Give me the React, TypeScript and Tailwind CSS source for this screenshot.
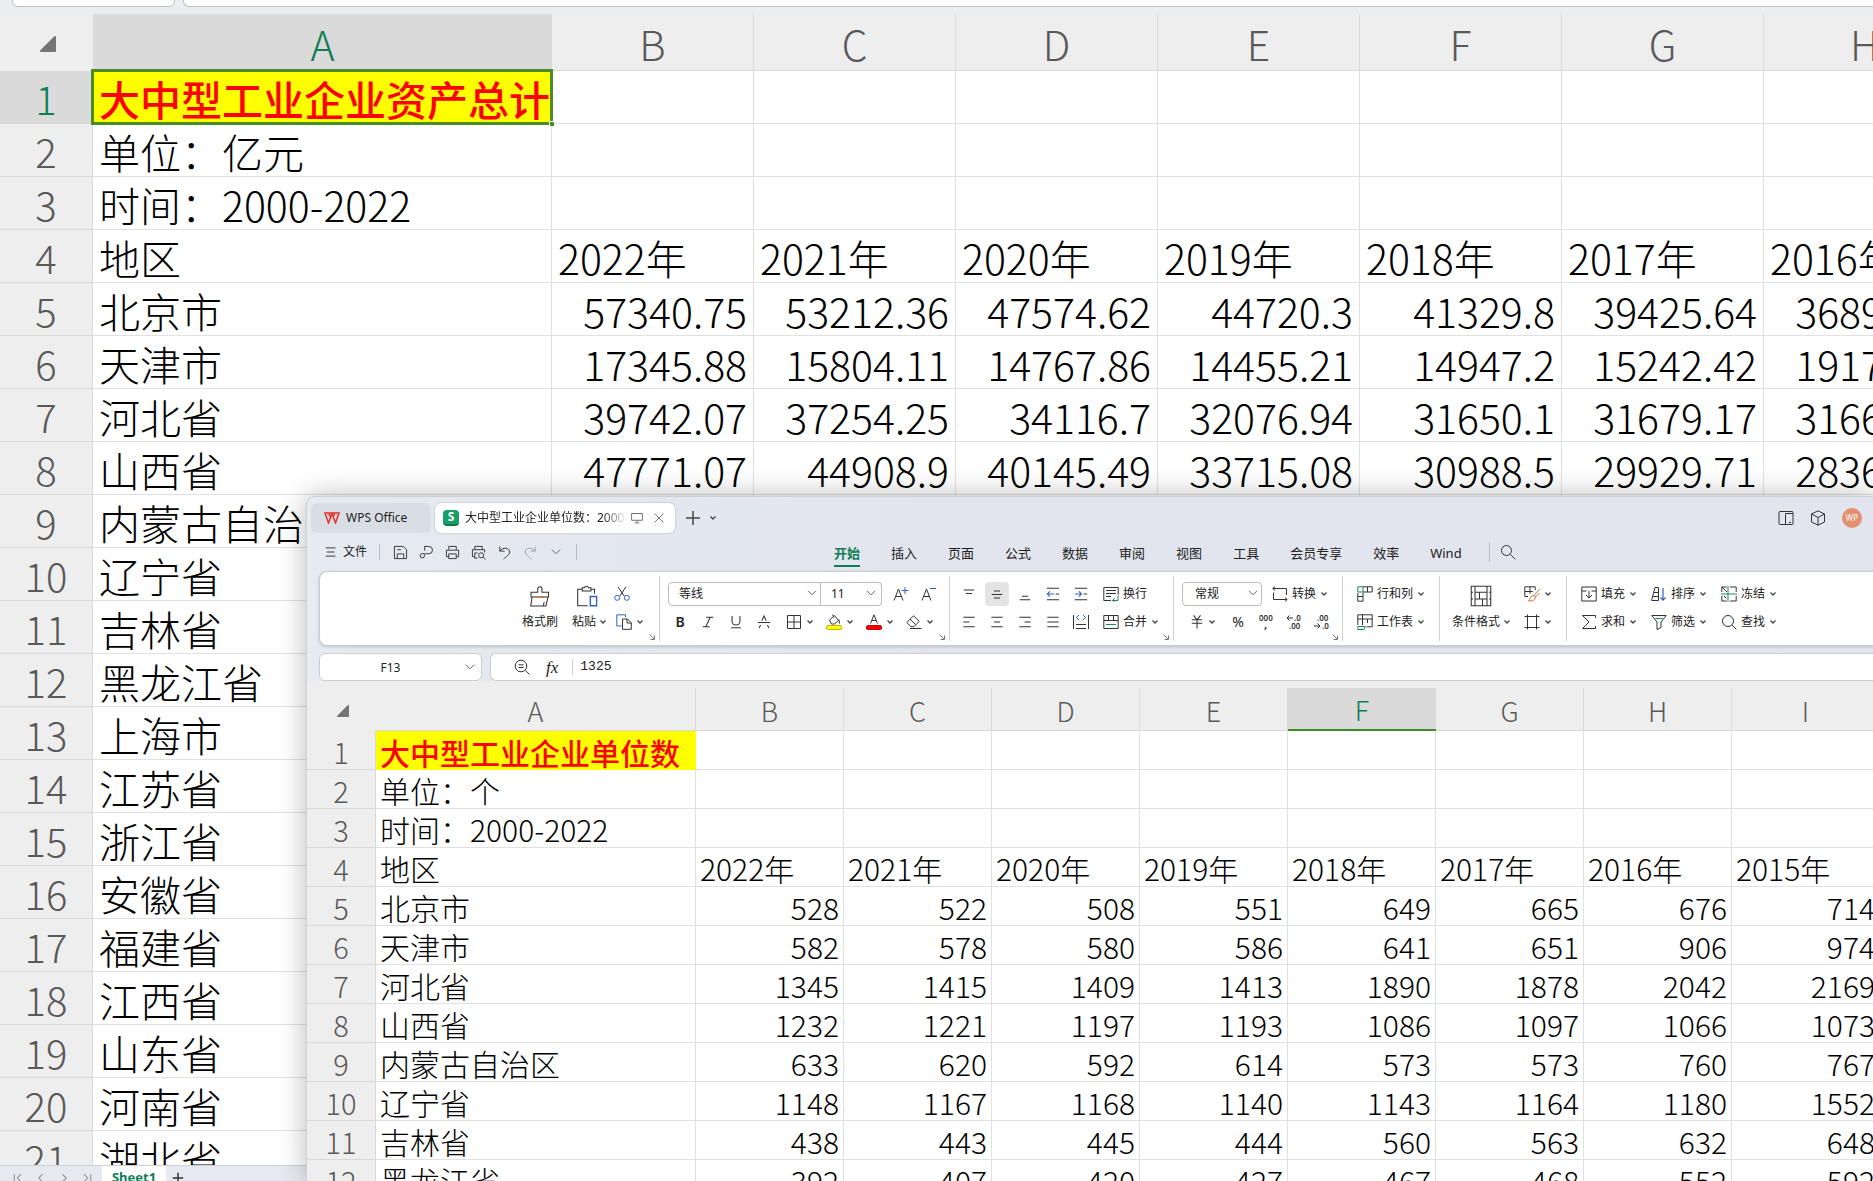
import React from 'react';

type Cell = string | number;

const years = ['2022年', '2021年', '2020年', '2019年', '2018年', '2017年', '2016年', '2015年'];

const assetRows: Cell[][] = [
  ['大中型工业企业资产总计'],
  ['单位：亿元'],
  ['时间：2000-2022'],
  ['地区', ...years.slice(0, 7)],
  ['北京市', 57340.75, 53212.36, 47574.62, 44720.3, 41329.8, 39425.64, 36891.52],
  ['天津市', 17345.88, 15804.11, 14767.86, 14455.21, 14947.2, 15242.42, 19172.64],
  ['河北省', 39742.07, 37254.25, 34116.7, 32076.94, 31650.1, 31679.17, 31665.38],
  ['山西省', 47771.07, 44908.9, 40145.49, 33715.08, 30988.5, 29929.71, 28364.25],
  ['内蒙古自治区'],
  ['辽宁省'],
  ['吉林省'],
  ['黑龙江省'],
  ['上海市'],
  ['江苏省'],
  ['浙江省'],
  ['安徽省'],
  ['福建省'],
  ['江西省'],
  ['山东省'],
  ['河南省'],
  ['湖北省'],
];

const unitRows: Cell[][] = [
  ['大中型工业企业单位数'],
  ['单位：个'],
  ['时间：2000-2022'],
  ['地区', ...years],
  ['北京市', 528, 522, 508, 551, 649, 665, 676, 714],
  ['天津市', 582, 578, 580, 586, 641, 651, 906, 974],
  ['河北省', 1345, 1415, 1409, 1413, 1890, 1878, 2042, 2169],
  ['山西省', 1232, 1221, 1197, 1193, 1086, 1097, 1066, 1073],
  ['内蒙古自治区', 633, 620, 592, 614, 573, 573, 760, 767],
  ['辽宁省', 1148, 1167, 1168, 1140, 1143, 1164, 1180, 1552],
  ['吉林省', 438, 443, 445, 444, 560, 563, 632, 648],
  ['黑龙江省', 392, 407, 420, 427, 467, 468, 552, 592],
];

const Icon: React.FC<{ children: React.ReactNode; size?: string; className?: string }> = ({
  children,
  size = 'size-4',
  className = '',
}) => (
  <svg
    viewBox="0 0 16 16"
    className={`${size} shrink-0 ${className}`}
    fill="none"
    stroke="#333"
    strokeWidth={1}
    aria-hidden="true"
  >
    {children}
  </svg>
);

const Chevron: React.FC = () => (
  <svg viewBox="0 0 6 4" className="h-1 w-1.5 shrink-0" fill="none" stroke="#444" strokeWidth={1.3} aria-hidden="true">
    <path d="M.5 .5 3 3 5.5 .5" />
  </svg>
);

const WideChevron: React.FC<{ className?: string }> = ({ className = '' }) => (
  <svg viewBox="0 0 10 6" className={`h-1.5 w-2.5 shrink-0 ${className}`} fill="none" stroke="#666" aria-hidden="true">
    <path d="M1 .8 5 4.8 9 .8" />
  </svg>
);

const IconButton: React.FC<{ label: string; active?: boolean; children: React.ReactNode }> = ({
  label,
  active,
  children,
}) => (
  <button aria-label={label} className="flex h-7 w-7 shrink-0 items-center justify-center">
    <span className={`flex size-6 items-center justify-center rounded ${active ? 'bg-[#e4e4e4]' : ''}`}>{children}</span>
  </button>
);

const DropButton: React.FC<{ label: string; children: React.ReactNode }> = ({ label, children }) => (
  <button aria-label={label} className="flex h-7 w-10 shrink-0 items-center gap-[5px] pl-2">
    {children}
    <Chevron />
  </button>
);

const LabelButton: React.FC<{ label: string; drop?: boolean; children: React.ReactNode }> = ({
  label,
  drop = true,
  children,
}) => (
  <button className="flex h-7 shrink-0 items-center gap-1 pl-2 whitespace-nowrap">
    {children}
    <span>{label}</span>
    {drop && (
      <span className="flex w-2.5 pl-px">
        <Chevron />
      </span>
    )}
  </button>
);

const Group: React.FC<{ className?: string; launcher?: boolean; children: React.ReactNode }> = ({
  className = '',
  launcher,
  children,
}) => (
  <div className={`relative my-1 flex shrink-0 flex-col border-r border-[#d0d0d0] pt-1 ${className}`}>
    {children}
    {launcher && (
      <svg viewBox="0 0 6 6" className="absolute right-1 bottom-px size-1.5" fill="none" stroke="#777" aria-hidden="true">
        <path d="M.5 .5 5 5M5.5 1.5v4h-4" />
      </svg>
    )}
  </div>
);

const lineIcons: Record<string, string> = {
  top: 'M2 3.5h12M4.5 7.5h7',
  middle: 'M4.5 4.5h7M2 8.5h12M4.5 12.5h7',
  bottom: 'M4.5 10.5h7M2 14.5h12',
  left: 'M1.5 2.5h13M1.5 8h7M1.5 13.5h13',
  center: 'M1.5 2.5h13M4.5 8h7M1.5 13.5h13',
  right: 'M1.5 2.5h13M7.5 8h7M1.5 13.5h13',
  justify: 'M1.5 2.5h13M1.5 8h13M1.5 13.5h13',
};

const LineIcon: React.FC<{ name: string }> = ({ name }) => (
  <Icon size="size-[14px]">
    <path d={lineIcons[name]} strokeWidth={1.2} />
  </Icon>
);

const Ribbon: React.FC = () => (
  <div className="ml-3 flex h-[75px] overflow-hidden rounded-l-lg border border-r-0 border-[#c9ced4] bg-white text-xs text-[#222] shadow-[0_1px_3px_rgba(0,0,0,0.18)]">
    <Group className="w-[340px] pl-[194px]" launcher>
      <div className="flex">
        <button className="flex w-[52px] flex-col items-center gap-1 pt-1">
          <Icon size="size-6">
            <path
              d="M6.5 5.5V3.2a1.4 1.4 0 0 1 2.8 0v2.3h4.4v3.2H2V5.5zM2.7 9l-.9 5.6H12L13.2 9M10.2 14.5l.6-2.5"
              strokeWidth={0.7}
            />
            <path d="M4 8.5h8" stroke="#c8743a" strokeWidth={0.8} />
          </Icon>
          <span className="leading-5">格式刷</span>
        </button>
        <button className="flex w-[42px] flex-col items-center gap-1 pt-1">
          <Icon size="size-6">
            <path
              d="M4.5 3.5H1.8v11h6.7M11 3.5h2v3M4.8 4.7V2.5h1.5c.1-1.3 2.5-1.3 2.7 0h1.6v2.2z"
              strokeWidth={0.7}
            />
            <path d="M10.2 8.3h4.2v6.2h-4.2z" stroke="#2f5fc4" strokeWidth={0.9} />
          </Icon>
          <span className="flex items-center gap-1 pl-1 leading-5">
            粘贴
            <Chevron />
          </span>
        </button>
        <div className="flex flex-col">
          <IconButton label="剪切">
            <Icon>
              <path d="M4 .8 10.2 10M12 .8 5.8 10" />
              <circle cx="3.2" cy="11.8" r="2.5" stroke="#2f5fc4" />
              <circle cx="12.8" cy="11.8" r="2.5" stroke="#2f5fc4" />
            </Icon>
          </IconButton>
          <DropButton label="复制">
            <Icon>
              <path d="M5.5 12H.8V.8h8.7V3" stroke="#2f5fc4" />
              <path d="M6.5 5h5l3.8 3.8v6.5H6.5zM11 5v4h4" />
            </Icon>
          </DropButton>
        </div>
      </div>
    </Group>

    <Group className="w-[290px] pl-1.5" launcher>
      <div className="flex h-7 items-center pl-0.5">
        <div className="relative">
          <select
            aria-label="字体"
            className="h-6 w-[153px] appearance-none rounded-l border border-[#bcbcbc] bg-white pl-2.5 text-[#222]"
          >
            <option>等线</option>
          </select>
          <WideChevron className="pointer-events-none absolute top-2 right-1" />
        </div>
        <div className="relative">
          <select
            aria-label="字号"
            className="h-6 w-[61px] appearance-none rounded-r border border-l-0 border-[#bcbcbc] bg-white pl-2.5 text-[#222]"
          >
            <option>11</option>
          </select>
          <WideChevron className="pointer-events-none absolute top-2 right-1.5" />
        </div>
        <span className="w-[5px]" />
        <IconButton label="增大字号">
          <Icon>
            <path d="M1 14.5 5.5 3 10 14.5M2.7 10.5h5.6" />
            <path d="M8.5 4.5h7M12 1v7" stroke="#2f5fc4" />
          </Icon>
        </IconButton>
        <IconButton label="减小字号">
          <Icon>
            <path d="M1 14.5 5.5 3 10 14.5M2.7 10.5h5.6" />
            <path d="M9 2.5h6" stroke="#2f5fc4" />
          </Icon>
        </IconButton>
      </div>
      <div className="flex">
        <IconButton label="加粗">
          <span className="text-sm font-semibold">B</span>
        </IconButton>
        <IconButton label="倾斜">
          <Icon size="size-[14px]">
            <path d="M6 2.5h8M2 13.5h8M10.5 2.5l-5 11" strokeWidth={1.2} />
          </Icon>
        </IconButton>
        <IconButton label="下划线">
          <Icon size="size-[14px]">
            <path d="M3.5 1v6.5a4.5 4 0 0 0 9 0V1M2.5 14.5h11" strokeWidth={1.2} />
          </Icon>
        </IconButton>
        <IconButton label="删除线">
          <Icon size="size-[14px]">
            <path d="M5.5 6.5 8 1l2.5 5.5M1 8.5h14M4 11.5 2.5 15M12 11.5l1.5 3.5" strokeWidth={1.2} />
          </Icon>
        </IconButton>
        <DropButton label="边框">
          <Icon>
            <path d="M1.5 1.500h13v13h-13zM8 1.5v13M1.5 8h13" />
          </Icon>
        </DropButton>
        <DropButton label="填充颜色">
          <Icon>
            <path d="M3.5 6l5-4.500 4 5L8.500 10h-3zM8 3.5 6.5 .5M13 5.5l.5 4" />
            <rect x=".5" y="11.5" width="15" height="4" rx="1.5" fill="#ff0" stroke="#c5b800" />
          </Icon>
        </DropButton>
        <DropButton label="字体颜色">
          <Icon>
            <path d="M4.5 9.5 8 .8l3.5 8.7M5.7 6.5h4.6" />
            <rect x=".5" y="11.5" width="15" height="4" rx="1.5" fill="#f00" stroke="#c00" />
          </Icon>
        </DropButton>
        <DropButton label="清除">
          <Icon>
            <path d="M.8 8.5 7.5 1.8l5.700 5.500-5.400 5.400H5zM4 5.200l5.800 5.500M4 14.5h11.5" />
          </Icon>
        </DropButton>
      </div>
    </Group>

    <Group className="w-[224px] pl-[5px]" launcher>
      <div className="flex">
        <IconButton label="顶端对齐">
          <LineIcon name="top" />
        </IconButton>
        <IconButton label="垂直居中" active>
          <LineIcon name="middle" />
        </IconButton>
        <IconButton label="底端对齐">
          <LineIcon name="bottom" />
        </IconButton>
        <IconButton label="减少缩进">
          <Icon size="size-[14px]">
            <path d="M1 1.5h14M1 14.5h14M11 8h4" strokeWidth={1.2} />
            <path d="M9 8H1.5M4.5 5l-3 3 3 3" stroke="#2f5fc4" strokeWidth={1.2} />
          </Icon>
        </IconButton>
        <IconButton label="增加缩进">
          <Icon size="size-[14px]">
            <path d="M1 1.5h14M1 14.5h14M11 8h4" strokeWidth={1.2} />
            <path d="M1 8h7.5M5.5 5l3 3-3 3" stroke="#2f5fc4" strokeWidth={1.2} />
          </Icon>
        </IconButton>
        <LabelButton label="换行" drop={false}>
          <Icon>
            <path d="M8 14.5H.8v-13h14.4V9M3 4.5h10M3 7.5h10M3 10.5h5" />
            <path d="M15 10v4.5H9.5M11.5 12.5l-2 2 2 1.5" stroke="#1a8563" />
          </Icon>
        </LabelButton>
      </div>
      <div className="flex">
        <IconButton label="左对齐">
          <LineIcon name="left" />
        </IconButton>
        <IconButton label="水平居中">
          <LineIcon name="center" />
        </IconButton>
        <IconButton label="右对齐">
          <LineIcon name="right" />
        </IconButton>
        <IconButton label="两端对齐">
          <LineIcon name="justify" />
        </IconButton>
        <IconButton label="分散对齐">
          <Icon>
            <path d="M.5 1v14M15.5 1v14M3 10.5h10M3 14.5h10" />
            <path d="M6 1 3.5 3.5 6 6M10 1l2.5 2.5L10 6" stroke="#2f5fc4" />
          </Icon>
        </IconButton>
        <LabelButton label="合并">
          <Icon>
            <path d="M.8 1.5h14.4v13H.8zM.8 6.5h14.4M5.5 1.5v5M10.5 1.5v5" />
            <path d="M3 10.5h10" stroke="#1a8563" />
          </Icon>
        </LabelButton>
      </div>
    </Group>

    <Group className="w-[169px] pl-2" launcher>
      <div className="flex h-7 items-center">
        <div className="relative">
          <select
            aria-label="数字格式"
            className="h-6 w-20 appearance-none rounded border border-[#bcbcbc] bg-white pl-3 text-[#222]"
          >
            <option>常规</option>
          </select>
          <WideChevron className="pointer-events-none absolute top-2 right-1" />
        </div>
        <span className="w-0.5" />
        <LabelButton label="转换">
          <Icon>
            <path d="M.8 2.5h13.700v6.500M3 .5l-2.200 2L3 4.500M1.5 6.500v7H15M13 11.5l2.200 2-2.200 2" />
          </Icon>
        </LabelButton>
      </div>
      <div className="flex">
        <DropButton label="货币格式">
          <Icon size="size-[14px]">
            <path d="M4 .5l4 5 4-5M2 5.5h12M2 9.5h12M8 5.5v10" strokeWidth={1.2} />
          </Icon>
        </DropButton>
        <span className="w-0.5" />
        <IconButton label="百分比">
          <span className="text-sm">%</span>
        </IconButton>
        <IconButton label="千位分隔">
          <svg viewBox="0 0 16 16" className="size-4 text-[8px] font-semibold" fill="#333" aria-hidden="true">
            <text x="1" y="7">000</text>
            <text x="6" y="14" className="text-[12px]">,</text>
          </svg>
        </IconButton>
        <IconButton label="增加小数位">
          <svg viewBox="0 0 16 16" className="size-4 text-[8px] font-semibold" fill="#333" aria-hidden="true">
            <text x="8" y="7">.0</text>
            <text x="3" y="15">.00</text>
            <path d="M7 4H1M3.500 1.500 1 4l2.500 2.500" fill="none" stroke="#333" />
          </svg>
        </IconButton>
        <IconButton label="减少小数位">
          <svg viewBox="0 0 16 16" className="size-4 text-[8px] font-semibold" fill="#333" aria-hidden="true">
            <text x="3" y="7">.00</text>
            <text x="8" y="15">.0</text>
            <path d="M0 12h6M3.500 9.500 6 12l-2.500 2.500" fill="none" stroke="#333" />
          </svg>
        </IconButton>
      </div>
    </Group>

    <Group className="w-[97px] pl-1.5">
      <LabelButton label="行和列">
        <Icon>
          <path d="M6 .8h9.2V6H6M10.5 .8V6M.8 7v8.200H6V7M.8 10.5H6" />
          <path d="M.8 .8H6V6H.8z" stroke="#1a8563" />
        </Icon>
      </LabelButton>
      <LabelButton label="工作表">
        <Icon>
          <path d="M.8 11V.8h14.4v12H9.5M.8 5h14.4M5.500 .8V11M10.5 5v4" />
          <path d="M.8 12.5h7.5l-1.500 3H.8z" stroke="#1a8563" />
        </Icon>
      </LabelButton>
    </Group>

    <Group className="w-[127px] pl-1.5">
      <div className="flex">
        <button className="flex w-[70px] flex-col items-center gap-1 pt-1">
          <Icon size="size-6">
            <path
              d="M4 1.500h8v13H4zM4 5.500h8M4 10h8M7 5.500V10M9 10v4.500M4 1.500H1.500v13H4M12 1.500h2.500v13H12M1.500 5.500h1.200M1.500 10h1.200M13.300 5.500h1.200M13.300 10h1.200"
              strokeWidth={0.7}
            />
          </Icon>
          <span className="flex items-center gap-1 leading-5">
            条件格式
            <Chevron />
          </span>
        </button>
        <div className="flex flex-col">
          <DropButton label="单元格样式">
            <Icon>
              <path d="M4 10.5H.8V.8h10.400V4M.8 5.500h8M6 .8v7" />
              <path
                d="M15.500 3.500 10 9.500M15.500 7l-4 4M9.500 9.500c2 0 2.500 2.500 1 4-1.500 1.500-4 1.500-6 1.500 1.500-1 1.500-5.500 5-5.500z"
                stroke="#c8743a"
              />
            </Icon>
          </DropButton>
          <DropButton label="单元格">
            <Icon>
              <path d="M3.5 .5v15M12.5 .5v15M.5 2.5h15M.5 13.5h15" />
            </Icon>
          </DropButton>
        </div>
      </div>
    </Group>

    <div className="grid shrink-0 grid-cols-[70px_70px_70px] content-start pt-2 pl-1.5">
      <LabelButton label="填充">
        <Icon>
          <path d="M.8 1h14.400v14H.8zM.8 5h4.700M10.500 5h4.700M8 5v7M5 9l3 3 3-3" />
        </Icon>
      </LabelButton>
      <LabelButton label="排序">
        <Icon>
          <path d="M.5 14.500 4 1.500h3.500v13M.8 14.500h6.700M3 6.500h4.500M2 10.500h5.500" />
          <path d="M12 2v12M9.500 11.500l2.500 2.700 2.500-2.700" stroke="#2f5fc4" strokeWidth={1.2} />
        </Icon>
      </LabelButton>
      <LabelButton label="冻结">
        <Icon>
          <path d="M.8 6V1h4.700M.8 10v5h4.700M9 1h6.200v5M9 15h6.200v-5M.8 1 6 6M3 10l2 2" />
          <path d="M0 8h16M7 0v16" stroke="#1a8563" />
        </Icon>
      </LabelButton>
      <LabelButton label="求和">
        <Icon>
          <path d="M14.500 4V1.500h-13L8 8l-6.500 6.500h13V12" />
        </Icon>
      </LabelButton>
      <LabelButton label="筛选">
        <Icon>
          <path d="M.8 1.500h14.400L10 8v5.500l-4 2V8z" />
          <path d="M4.500 4.500h7" stroke="#1a8563" />
        </Icon>
      </LabelButton>
      <LabelButton label="查找">
        <Icon>
          <circle cx="7" cy="7" r="5.5" />
          <path d="m11 11 4.300 4.300" />
        </Icon>
      </LabelButton>
    </div>
  </div>
);

const TitleBar: React.FC = () => (
  <div className="flex h-[30px] items-center pl-1 text-xs text-[#222]">
    <button className="flex h-[30px] w-[120px] items-center gap-1.5 rounded-md bg-[#d9dee4] pl-[13px]">
      <svg viewBox="0 0 16 12" className="h-3 w-4" fill="none" stroke="#e8322c" strokeWidth={1.5} aria-hidden="true">
        <path d="M1 1h14l-3.500 10L8 1.500 4.500 11zM4.800 1l2.200 5.500M11 1l-2 4" />
      </svg>
      WPS Office
    </button>
    <div className="ml-1 flex h-[30px] w-60 items-center rounded-md bg-white pl-2 shadow-[0_0_2px_rgba(0,0,0,0.3)]">
      <span className="flex size-4 items-center justify-center rounded-sm border-b-2 border-[#0c7747] bg-[#17a065] text-xs leading-none font-bold text-white">
        S
      </span>
      <span className="ml-1.5 w-[162px] overflow-hidden [mask-image:linear-gradient(to_right,black_85%,transparent)] whitespace-nowrap">
        大中型工业企业单位数：2000-2022
      </span>
      <Icon size="size-3" className="ml-1 opacity-70">
        <path d="M.8 2h14.4v9H.8zM5 14.5h6M8 11v3" strokeWidth={1.3} />
      </Icon>
      <button aria-label="关闭" className="ml-2.5">
        <Icon size="size-3">
          <path d="m2 2 12 12M14 2 2 14" stroke="#777" strokeWidth={1.3} />
        </Icon>
      </button>
    </div>
    <button aria-label="新建" className="ml-2.5">
      <Icon>
        <path d="M8 1v14M1 8h14" stroke="#444" strokeWidth={1.5} />
      </Icon>
    </button>
    <button aria-label="更多标签" className="ml-[9px]">
      <Chevron />
    </button>
    <div className="ml-auto flex items-center gap-4 pr-[11px]">
      <button aria-label="侧栏">
        <Icon>
          <rect x="1" y="1.5" width="14" height="13" rx="1" />
          <path d="M7.5 14.5v-11H15M11 12.5h2" />
        </Icon>
      </button>
      <button aria-label="应用">
        <Icon>
          <path d="M8 .8 14.5 4v8L8 15.2 1.5 12V4zM1.5 4 8 7.5 14.5 4M8 7.5v7.7" />
        </Icon>
      </button>
      <button aria-label="账户" className="size-5 rounded-full bg-[#e2906f] text-[8px] text-white">
        WP
      </button>
    </div>
  </div>
);

const menus = ['开始', '插入', '页面', '公式', '数据', '审阅', '视图', '工具', '会员专享', '效率', 'Wind'];

const quickIcons: { label: string; d: string; faint?: boolean }[] = [
  { label: '保存', d: 'M1.5 1.5H11L14.5 5v9.5h-13zM4.5 14.5v-5h7v5M4.5 5h4' },
  { label: '输出为PDF', d: 'M6 6V1.5h4.5a3.800 3.800 0 0 1 0 7.800H7c-1 0-1.200.8-1.200 2.200a2.300 2.300 0 1 1-2.300-2.300H6' },
  { label: '打印', d: 'M4 5V1.500h8V5M4 12.500H1.500v-7h13v7H12M4 9.500h8v5H4z' },
  {
    label: '打印预览',
    d: 'M4 5V1.500h8V5M4 12.500H1.500V5h13v3M7 14H4V8.500h3M15.500 15.500 13 13M13.500 11a2.700 2.700 0 1 1-5.400 0 2.700 2.700 0 0 1 5.400 0z',
  },
  { label: '撤销', d: 'M3 1.500v5h5M3 6.500C6 2 13.500 2.500 13.500 7.500c0 3-4 5-6.500 7.500' },
  { label: '恢复', d: 'M13 1.500v5H8M13 6.500C10 2 2.500 2.500 2.500 7.500c0 3 4 5 6.500 7.500', faint: true },
];

const MenuBar: React.FC = () => (
  <div className="flex h-[38px] items-center pl-[18px] text-[13px] text-[#222]">
    <button className="flex items-center gap-1.5 text-xs">
      <Icon size="size-3">
        <path d="M1 2.5h13M2.5 8h10M1 13.5h13" strokeWidth={1.3} />
      </Icon>
      文件
    </button>
    <span className="ml-3 h-4 w-px bg-[#b9bec5]" />
    <div className="ml-[7px] flex">
      {quickIcons.map((q) => (
        <button
          key={q.label}
          aria-label={q.label}
          className={`flex w-[26px] justify-center ${q.faint ? 'opacity-40' : ''}`}
        >
          <Icon size="size-[15px]">
            <path d={q.d} />
          </Icon>
        </button>
      ))}
      <button aria-label="自定义快速访问" className="flex w-[26px] items-center justify-center">
        <WideChevron />
      </button>
    </div>
    <span className="ml-[7px] h-4 w-px bg-[#b9bec5]" />
    <nav className="ml-[257px] flex shrink-0 gap-[31px]">
      {menus.map((m) => (
        <a
          key={m}
          href="#"
          className={`border-b-2 pt-1 leading-6 ${
            m === '开始' ? 'border-[#0f7d55] font-bold text-[#0f7d55]' : 'border-transparent'
          }`}
        >
          {m}
        </a>
      ))}
    </nav>
    <span className="ml-[27px] h-5 w-px bg-[#b9bec5]" />
    <button aria-label="搜索" className="ml-2.5">
      <Icon>
        <circle cx="6.5" cy="6.5" r="5" />
        <path d="m10.5 10.5 4.800 4.800" />
      </Icon>
    </button>
  </div>
);

const FormulaBar: React.FC = () => (
  <div className="mt-[7px] flex h-7 shrink-0 pl-3 text-xs text-[#222]">
    <div className="relative">
      <input
        aria-label="名称框"
        defaultValue="F13"
        className="h-7 w-[163px] rounded-md border border-[#c9ced4] bg-white pr-5 text-center"
      />
      <WideChevron className="absolute top-[11px] right-[7px]" />
    </div>
    <div className="ml-2 flex flex-1 items-center rounded-l-md border border-r-0 border-[#c9ced4] bg-white pl-[23px]">
      <button aria-label="查看公式">
        <Icon>
          <circle cx="7" cy="7" r="5.8" />
          <path d="m11.500 11.500 3.800 3.800M4.500 5.800h5M4.500 8.500h5" />
        </Icon>
      </button>
      <button aria-label="插入函数" className="ml-4 font-['Liberation_Serif',serif] text-[17px] leading-none italic">
        fx
      </button>
      <span className="ml-3.5 h-4 w-px bg-[#ccc]" />
      <input
        aria-label="编辑栏"
        defaultValue="1325"
        className="ml-[7px] flex-1 bg-transparent font-['Liberation_Mono',monospace] text-[13px] outline-none"
      />
    </div>
  </div>
);

interface SheetProps {
  rows: Cell[][];
  columns: string;
  large?: boolean;
  activeColumn: string;
  activeRow?: number;
}

const Sheet: React.FC<SheetProps> = ({ rows, columns, large, activeColumn, activeRow }) => {
  const tableCls = large ? 'w-[1966px] text-[41px]' : 'w-[1573px] text-[30px]';
  const headCls = large ? 'h-[57px]' : 'h-[43px] text-[27px]';
  const rowCls = large ? 'h-[53px]' : 'h-[39px]';
  const numberCls = large ? 'text-[40px]' : 'text-[29px]';
  const cellCls = large ? 'pl-1.5 pr-1.5' : 'pl-1 pr-1';

  return (
    <table
      className={`table-fixed border-separate border-spacing-0 font-['Noto_Sans_CJK_SC',sans-serif] leading-none font-light text-black ${tableCls}`}
    >
      <colgroup>
        <col className={large ? 'w-[93px]' : 'w-[69px]'} />
        <col className={large ? 'w-[459px]' : 'w-[320px]'} />
        {columns.slice(1).split('').map((c) => (
          <col key={c} className={large ? 'w-[202px]' : 'w-[148px]'} />
        ))}
      </colgroup>
      <thead>
        <tr className={`bg-[#eeeeee] text-[#595959] ${headCls}`}>
          <td className="border-b border-[#eeeeee] p-0 pt-1">
            <svg
              viewBox="0 0 16 16"
              className={large ? 'ml-10 size-4' : 'ml-[30px] size-3'}
              fill="#757575"
              stroke="#757575"
              strokeWidth={2}
              strokeLinejoin="round"
              aria-hidden="true"
            >
              <path d="M15 1v14H1z" />
            </svg>
          </td>
          {columns.split('').map((c) => (
            <th
              key={c}
              scope="col"
              className={
                c === activeColumn
                  ? `bg-[#dadada] p-0 pt-0.5 font-light text-[#0f7d55] ${large ? '' : 'border-b-2 border-[#3f8a2b]'}`
                  : 'border-r border-b border-[#d8d8d8] p-0 pt-0.5 font-light'
              }
            >
              {c}
            </th>
          ))}
        </tr>
      </thead>
      <tbody>
        {rows.map((row, i) => (
          <tr key={i} className={rowCls}>
            <th
              scope="row"
              className={`border-r border-b border-[#d8d8d8] p-0 pt-0.5 font-light ${numberCls} ${
                i + 1 === activeRow ? 'bg-[#dadada] text-[#0f7d55]' : 'bg-[#eeeeee] text-[#595959]'
              }`}
            >
              {i + 1}
            </th>
            {columns.split('').map((c, j) => {
              const value = row[j];
              if (i === 0 && j === 0) {
                return (
                  <td
                    key={c}
                    className={`relative bg-[#ffff00] py-0 pt-0.5 font-medium whitespace-nowrap text-[#ff0000] ${cellCls}`}
                  >
                    {value}
                    {activeRow === 1 && (
                      <>
                        <span className="absolute -top-0.5 -right-px -bottom-px -left-0.5 border-3 border-[#4a8c26]" />
                        <span className="absolute -right-0.5 -bottom-0.5 size-[5px] border-t border-l border-white bg-[#4a8c26]" />
                      </>
                    )}
                  </td>
                );
              }
              return (
                <td
                  key={c}
                  className={`border-r border-b border-[#e1e1e1] bg-white py-0 pt-0.5 whitespace-nowrap ${cellCls} ${
                    typeof value === 'number' ? 'text-right' : 'text-left'
                  }`}
                >
                  {value}
                </td>
              );
            })}
          </tr>
        ))}
      </tbody>
    </table>
  );
};

const SheetTabs: React.FC = () => (
  <div className="h-4 shrink-0 overflow-hidden border-t border-[#ccd1d6] bg-[#e6eaf0]">
    <div className="flex h-6 items-center text-[13px]">
      <div className="flex w-[102px] items-center gap-[11px] pl-3">
        {['M3 3v10M12 3 7 8l5 5', 'M10 3 5 8l5 5', 'M6 3l5 5-5 5', 'M4 3l5 5-5 5M13 3v10'].map((d) => (
          <button key={d} aria-label="切换工作表">
            <Icon size="size-3">
              <path d={d} stroke="#999" strokeWidth={1.5} />
            </Icon>
          </button>
        ))}
      </div>
      <button className="h-full w-16 bg-white font-bold text-[#0f7d55]">Sheet1</button>
      <button aria-label="新建工作表" className="ml-1.5">
        <Icon size="size-3">
          <path d="M8 1v14M1 8h14" strokeWidth={2} />
        </Icon>
      </button>
    </div>
  </div>
);

export default function App() {
  return (
    <main className="relative h-screen w-full overflow-hidden bg-[#eeeeee] font-['Noto_Sans','Noto_Sans_CJK_SC',sans-serif]">
      <section className="flex h-full flex-col">
        <div className="flex h-3.5 shrink-0 items-end gap-2 overflow-hidden bg-[#ebedef] pb-[7px] pl-3">
          <input aria-label="名称" className="h-7 w-[163px] shrink-0 rounded-md border border-[#b9bfbf] bg-white" />
          <input aria-label="公式" className="h-7 flex-1 rounded-l-md border border-r-0 border-[#b9bfbf] bg-white" />
        </div>
        <div className="flex-1 overflow-hidden">
          <Sheet rows={assetRows} columns="ABCDEFGH" large activeColumn="A" activeRow={1} />
        </div>
        <SheetTabs />
      </section>

      <section className="absolute top-[496px] right-0 bottom-0 left-[306px] flex flex-col overflow-hidden rounded-tl-lg border-t border-l border-[#cdd1d6] bg-linear-to-r from-[#e5ebf1] to-[#e2e5ee] to-40% pt-1.5 shadow-[0_0_28px_rgba(0,0,0,0.28)]">
        <TitleBar />
        <MenuBar />
        <Ribbon />
        <FormulaBar />
        <div className="flex-1 overflow-hidden bg-[#eeeeee] pt-[7px]">
          <Sheet rows={unitRows} columns="ABCDEFGHI" activeColumn="F" />
        </div>
      </section>
    </main>
  );
}
